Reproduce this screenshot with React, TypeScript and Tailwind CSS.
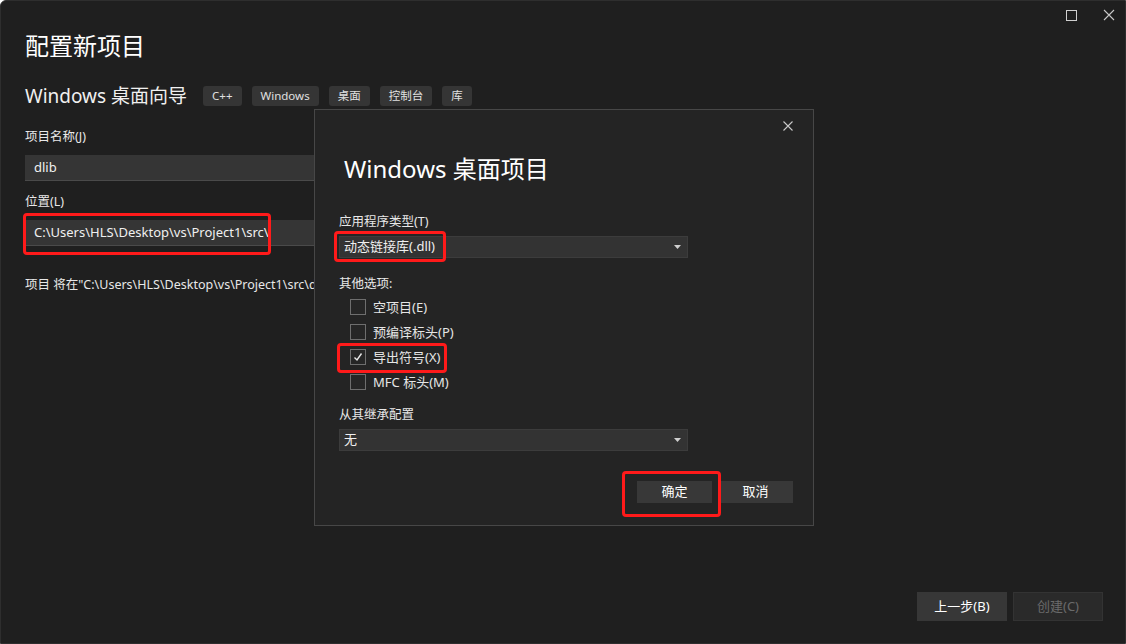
import React from 'react';

const font = { fontFamily: '"Segoe UI", "Noto Sans", "Noto Sans CJK SC", sans-serif' };

function Tag({ children }: { children: React.ReactNode }) {
  return (
    <span className="h-[20px] px-[9px] flex items-center bg-[#353535] rounded-[3px] text-[11.5px] text-[#e0e0e0]">
      {children}
    </span>
  );
}

function Check({ label, checked }: { label: string; checked?: boolean }) {
  return (
    <div className="flex items-center h-[25px] gap-[7px] pl-[11px]">
      <span className="w-[16px] h-[16px] border border-[#6e6e6e] bg-[#262626] flex items-center justify-center">
        {checked && (
          <svg width="12" height="12" viewBox="0 0 12 12">
            <path d="M2.5 6.5 L5 9 L9.5 2.5" stroke="#e8e8e8" strokeWidth="1.4" fill="none" />
          </svg>
        )}
      </span>
      <span className="text-[13px] leading-[18px] text-[#e6e6e6]">{label}</span>
    </div>
  );
}

function Select({ value }: { value: string }) {
  return (
    <div className="h-[22px] w-[349px] bg-[#333333] border border-[#3c3c3c] flex items-center justify-between pl-[4px] pr-[6px]">
      <span className="text-[13px] text-[#f0f0f0]">{value}</span>
      <svg width="7" height="4" viewBox="0 0 7 4"><path d="M0 0 H7 L3.5 4 Z" fill="#cfcfcf" /></svg>
    </div>
  );
}

export default function App() {
  return (
    <div style={font} className="w-[1126px] h-[644px] bg-[#1f1f1f] relative overflow-hidden text-[#f0f0f0] border border-[#2e2e2e] rounded-tl-[6px]">
      {/* title bar buttons */}
      <div className="absolute top-[8px] right-[10px] flex items-center gap-[26px]">
        <svg width="11" height="11" viewBox="0 0 11 11"><rect x="0.5" y="0.5" width="10" height="10" stroke="#d0d0d0" fill="none" /></svg>
        <svg width="12" height="12" viewBox="0 0 12 12"><path d="M1 1 L11 11 M11 1 L1 11" stroke="#c8c8c8" strokeWidth="1.1" /></svg>
      </div>

      <div className="pl-[24px] pt-[27px] flex flex-col">
        <h1 className="text-[24px] leading-[36px] text-white">配置新项目</h1>
        <div className="flex items-center mt-[17px] gap-[10px]">
          <span className="text-[19px] leading-[30px] mr-[6px]">Windows 桌面向导</span>
          <Tag>C++</Tag>
          <Tag>Windows</Tag>
          <Tag>桌面</Tag>
          <Tag>控制台</Tag>
          <Tag>库</Tag>
        </div>
        <label className="text-[12.5px] mt-[17px] leading-[18px] text-[#e8e8e8]">项目名称(J)</label>
        <div className="mt-[9px] w-[560px] h-[26px] bg-[#353535] border-b border-[#4a4a4a] flex items-center pl-[9px] text-[13px]">dlib</div>
        <label className="text-[12.5px] mt-[12px] leading-[18px] text-[#e8e8e8]">位置(L)</label>
        <div className="mt-[9px] w-[560px] h-[26px] bg-[#353535] border-b border-[#4a4a4a] flex items-center pl-[9px] text-[13px]">C:\Users\HLS\Desktop\vs\Project1\src\</div>
        {/* the rest of this line lies under the dialog */}
        <p className="mt-[30px] w-[290px] overflow-hidden text-[12.5px] text-[#e8e8e8] whitespace-nowrap">项目 将在"C:\Users\HLS\Desktop\vs\Project1\src\dlib\"中创建</p>
      </div>

      {/* bottom buttons */}
      <div className="absolute right-[22px] bottom-[22px] flex gap-[6px]">
        <button className="w-[90px] h-[29px] bg-[#373737] text-[13px] text-white">上一步(B)</button>
        <button className="w-[90px] h-[29px] bg-[#2a2a2a] border border-[#333] text-[13px] text-[#6a6a6a]">创建(C)</button>
      </div>

      {/* dialog */}
      <div className="absolute left-[313px] top-[108px] w-[500px] h-[417px] bg-[#242424] border border-[#474747] flex flex-col pl-[24px]">
        <svg className="absolute top-[11px] right-[20px]" width="10" height="10" viewBox="0 0 10 10"><path d="M0.5 0.5 L9.5 9.5 M9.5 0.5 L0.5 9.5" stroke="#c8c8c8" strokeWidth="1.1" /></svg>
        <h2 className="mt-[42px] ml-[5px] text-[24px] leading-[34px] text-white">Windows 桌面项目</h2>
        <div className="mt-[27px] text-[12.5px] leading-[18px] text-[#e8e8e8]">应用程序类型(T)</div>
        <div className="mt-[5px]"><Select value="动态链接库(.dll)" /></div>
        <div className="mt-[18px] text-[12.5px] leading-[16px] text-[#e8e8e8]">其他选项:</div>
        <div className="mt-[2px] flex flex-col">
          <Check label="空项目(E)" />
          <Check label="预编译标头(P)" />
          <Check label="导出符号(X)" checked />
          <Check label="MFC 标头(M)" />
        </div>
        <div className="mt-[12px] text-[12.5px] leading-[18px] text-[#e8e8e8]">从其继承配置</div>
        <div className="mt-[5px]"><Select value="无" /></div>
        <div className="mt-[30px] flex justify-end gap-[6px] pr-[20px]">
          <button className="w-[75px] h-[22px] bg-[#383838] text-[13px] text-white">确定</button>
          <button className="w-[75px] h-[22px] bg-[#383838] text-[13px] text-white">取消</button>
        </div>
      </div>

      {/* red annotation boxes */}
      <div className="absolute left-[22px] top-[212px] w-[248px] h-[42px] border-[3px] border-[#ff1a1a] rounded-[4px]" />
      <div className="absolute left-[333px] top-[230px] w-[112px] h-[31px] border-[3px] border-[#ff1a1a] rounded-[4px]" />
      <div className="absolute left-[336px] top-[342px] w-[110px] h-[30px] border-[3px] border-[#ff1a1a] rounded-[4px]" />
      <div className="absolute left-[621px] top-[470px] w-[99px] h-[46px] border-[3px] border-[#ff1a1a] rounded-[4px]" />
    </div>
  );
}
